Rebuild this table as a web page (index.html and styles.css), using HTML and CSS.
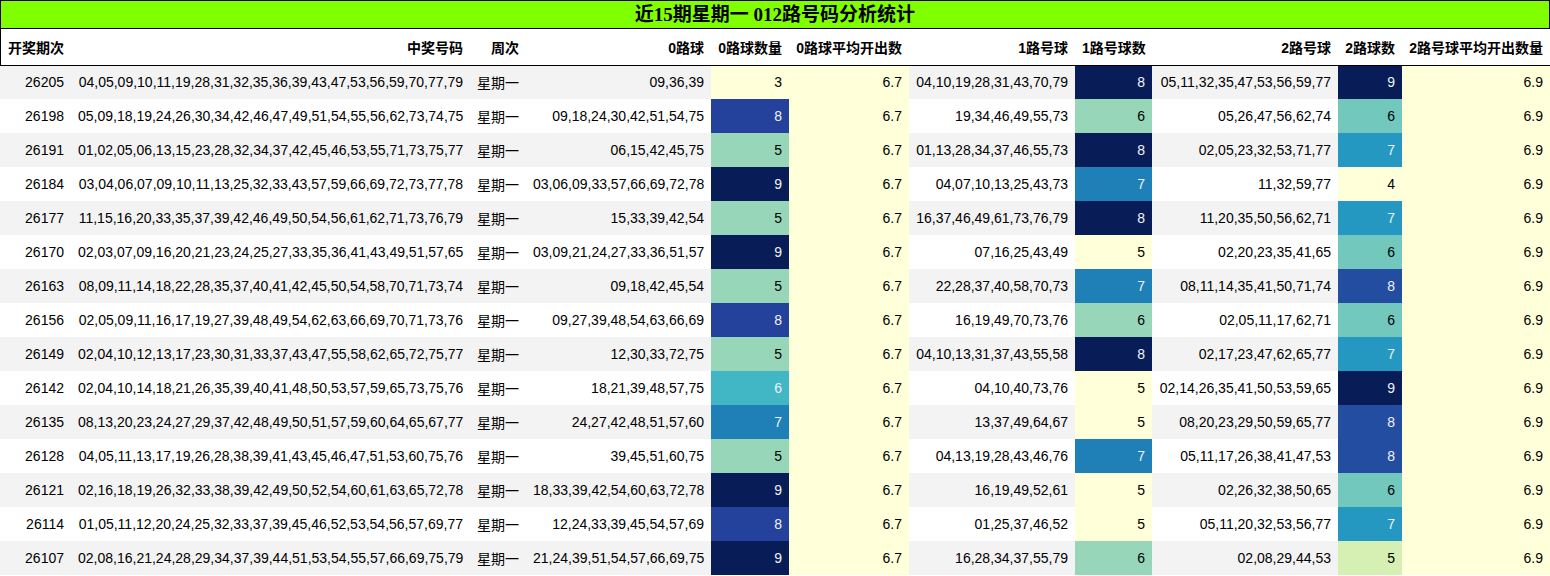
FILE: index.html
```html
<!DOCTYPE html>
<html lang="zh-CN">
<head>
<meta charset="utf-8">
<title>近15期星期一 012路号码分析统计</title>
<link rel="stylesheet" href="styles.css">
</head>
<body>
<div class="title">近15期星期一 012路号码分析统计</div>
<table class="stats">
<colgroup>
<col class="c1"><col class="c2"><col class="c3"><col class="c4"><col class="c5"><col class="c6"><col class="c7"><col class="c8"><col class="c9"><col class="c10"><col class="c11">
</colgroup>
<thead>
<tr><th class="first">开奖期次</th><th>中奖号码</th><th>周次</th><th>0路球</th><th>0路球数量</th><th>0路球平均开出数</th><th>1路号球</th><th>1路号球数</th><th>2路号球</th><th>2路球数</th><th class="last">2路号球平均开出数量</th></tr>
</thead>
<tbody>
<tr><td>26205</td><td>04,05,09,10,11,19,28,31,32,35,36,39,43,47,53,56,59,70,77,79</td><td>星期一</td><td>09,36,39</td><td class="g0">3</td><td class="g0">6.7</td><td>04,10,19,28,31,43,70,79</td><td class="g100 lt">8</td><td>05,11,32,35,47,53,56,59,77</td><td class="g100 lt">9</td><td class="g0">6.9</td></tr>
<tr><td>26198</td><td>05,09,18,19,24,26,30,34,42,46,47,49,51,54,55,56,62,73,74,75</td><td>星期一</td><td>09,18,24,30,42,51,54,75</td><td class="g83 lt">8</td><td class="g0">6.7</td><td>19,34,46,49,55,73</td><td class="g33">6</td><td>05,26,47,56,62,74</td><td class="g40">6</td><td class="g0">6.9</td></tr>
<tr><td>26191</td><td>01,02,05,06,13,15,23,28,32,34,37,42,45,46,53,55,71,73,75,77</td><td>星期一</td><td>06,15,42,45,75</td><td class="g33">5</td><td class="g0">6.7</td><td>01,13,28,34,37,46,55,73</td><td class="g100 lt">8</td><td>02,05,23,32,53,71,77</td><td class="g60 lt">7</td><td class="g0">6.9</td></tr>
<tr><td>26184</td><td>03,04,06,07,09,10,11,13,25,32,33,43,57,59,66,69,72,73,77,78</td><td>星期一</td><td>03,06,09,33,57,66,69,72,78</td><td class="g100 lt">9</td><td class="g0">6.7</td><td>04,07,10,13,25,43,73</td><td class="g67 lt">7</td><td>11,32,59,77</td><td class="g0">4</td><td class="g0">6.9</td></tr>
<tr><td>26177</td><td>11,15,16,20,33,35,37,39,42,46,49,50,54,56,61,62,71,73,76,79</td><td>星期一</td><td>15,33,39,42,54</td><td class="g33">5</td><td class="g0">6.7</td><td>16,37,46,49,61,73,76,79</td><td class="g100 lt">8</td><td>11,20,35,50,56,62,71</td><td class="g60 lt">7</td><td class="g0">6.9</td></tr>
<tr><td>26170</td><td>02,03,07,09,16,20,21,23,24,25,27,33,35,36,41,43,49,51,57,65</td><td>星期一</td><td>03,09,21,24,27,33,36,51,57</td><td class="g100 lt">9</td><td class="g0">6.7</td><td>07,16,25,43,49</td><td class="g0">5</td><td>02,20,23,35,41,65</td><td class="g40">6</td><td class="g0">6.9</td></tr>
<tr><td>26163</td><td>08,09,11,14,18,22,28,35,37,40,41,42,45,50,54,58,70,71,73,74</td><td>星期一</td><td>09,18,42,45,54</td><td class="g33">5</td><td class="g0">6.7</td><td>22,28,37,40,58,70,73</td><td class="g67 lt">7</td><td>08,11,14,35,41,50,71,74</td><td class="g80 lt">8</td><td class="g0">6.9</td></tr>
<tr><td>26156</td><td>02,05,09,11,16,17,19,27,39,48,49,54,62,63,66,69,70,71,73,76</td><td>星期一</td><td>09,27,39,48,54,63,66,69</td><td class="g83 lt">8</td><td class="g0">6.7</td><td>16,19,49,70,73,76</td><td class="g33">6</td><td>02,05,11,17,62,71</td><td class="g40">6</td><td class="g0">6.9</td></tr>
<tr><td>26149</td><td>02,04,10,12,13,17,23,30,31,33,37,43,47,55,58,62,65,72,75,77</td><td>星期一</td><td>12,30,33,72,75</td><td class="g33">5</td><td class="g0">6.7</td><td>04,10,13,31,37,43,55,58</td><td class="g100 lt">8</td><td>02,17,23,47,62,65,77</td><td class="g60 lt">7</td><td class="g0">6.9</td></tr>
<tr><td>26142</td><td>02,04,10,14,18,21,26,35,39,40,41,48,50,53,57,59,65,73,75,76</td><td>星期一</td><td>18,21,39,48,57,75</td><td class="g50 lt">6</td><td class="g0">6.7</td><td>04,10,40,73,76</td><td class="g0">5</td><td>02,14,26,35,41,50,53,59,65</td><td class="g100 lt">9</td><td class="g0">6.9</td></tr>
<tr><td>26135</td><td>08,13,20,23,24,27,29,37,42,48,49,50,51,57,59,60,64,65,67,77</td><td>星期一</td><td>24,27,42,48,51,57,60</td><td class="g67 lt">7</td><td class="g0">6.7</td><td>13,37,49,64,67</td><td class="g0">5</td><td>08,20,23,29,50,59,65,77</td><td class="g80 lt">8</td><td class="g0">6.9</td></tr>
<tr><td>26128</td><td>04,05,11,13,17,19,26,28,38,39,41,43,45,46,47,51,53,60,75,76</td><td>星期一</td><td>39,45,51,60,75</td><td class="g33">5</td><td class="g0">6.7</td><td>04,13,19,28,43,46,76</td><td class="g67 lt">7</td><td>05,11,17,26,38,41,47,53</td><td class="g80 lt">8</td><td class="g0">6.9</td></tr>
<tr><td>26121</td><td>02,16,18,19,26,32,33,38,39,42,49,50,52,54,60,61,63,65,72,78</td><td>星期一</td><td>18,33,39,42,54,60,63,72,78</td><td class="g100 lt">9</td><td class="g0">6.7</td><td>16,19,49,52,61</td><td class="g0">5</td><td>02,26,32,38,50,65</td><td class="g40">6</td><td class="g0">6.9</td></tr>
<tr><td>26114</td><td>01,05,11,12,20,24,25,32,33,37,39,45,46,52,53,54,56,57,69,77</td><td>星期一</td><td>12,24,33,39,45,54,57,69</td><td class="g83 lt">8</td><td class="g0">6.7</td><td>01,25,37,46,52</td><td class="g0">5</td><td>05,11,20,32,53,56,77</td><td class="g60 lt">7</td><td class="g0">6.9</td></tr>
<tr><td>26107</td><td>02,08,16,21,24,28,29,34,37,39,44,51,53,54,55,57,66,69,75,79</td><td>星期一</td><td>21,24,39,51,54,57,66,69,75</td><td class="g100 lt">9</td><td class="g0">6.7</td><td>16,28,34,37,55,79</td><td class="g33">6</td><td>02,08,29,44,53</td><td class="g20">5</td><td class="g0">6.9</td></tr>
</tbody>
</table>
</body>
</html>
```

FILE: styles.css
```css
html, body {
  margin: 0;
  padding: 0;
  background: #ffffff;
}

.title {
  box-sizing: border-box;
  height: 29px;
  border: 1px solid #000000;
  background: #7fff00;
  color: #000000;
  text-align: center;
  font-family: "Liberation Serif", "Noto Sans CJK SC", serif;
  font-weight: bold;
  font-size: 19px;
  line-height: 27px;
}

.stats {
  width: 1550px;
  table-layout: fixed;
  border-collapse: collapse;
  border-spacing: 0;
  font-family: "Liberation Sans", "Noto Sans CJK SC", sans-serif;
  font-size: 14px;
  color: #000000;
}

.c1 { width: 71px; }
.c2 { width: 399px; }
.c3 { width: 56px; }
.c4 { width: 185px; }
.c5 { width: 78px; }
.c6 { width: 120px; }
.c7 { width: 166px; }
.c8 { width: 77px; }
.c9 { width: 186px; }
.c10 { width: 64px; }
.c11 { width: 148px; }

.stats th,
.stats td {
  padding: 0 7px;
  text-align: right;
  white-space: nowrap;
  overflow: hidden;
}

.stats thead tr {
  height: 36px;
  border-bottom: 1px solid #000000;
}

.stats th {
  font-weight: bold;
  background: #ffffff;
}

.stats th.first {
  box-shadow: inset 1px 0 0 #000000;
}

.stats tbody tr {
  height: 34px;
  background: #ffffff;
}

.stats tbody tr:nth-child(odd) {
  background: #f3f3f3;
}

.stats td.g0 { background: #ffffd9; }
.stats td.g20 { background: #d6efb3; }
.stats td.g33 { background: #97d6b9; }
.stats td.g40 { background: #73c8bd; }
.stats td.g50 { background: #41b6c4; }
.stats td.g60 { background: #2498c1; }
.stats td.g67 { background: #1f80b8; }
.stats td.g80 { background: #234da0; }
.stats td.g83 { background: #24429b; }
.stats td.g100 { background: #081d58; }

.stats td.lt { color: #f1f1f1; }
```
